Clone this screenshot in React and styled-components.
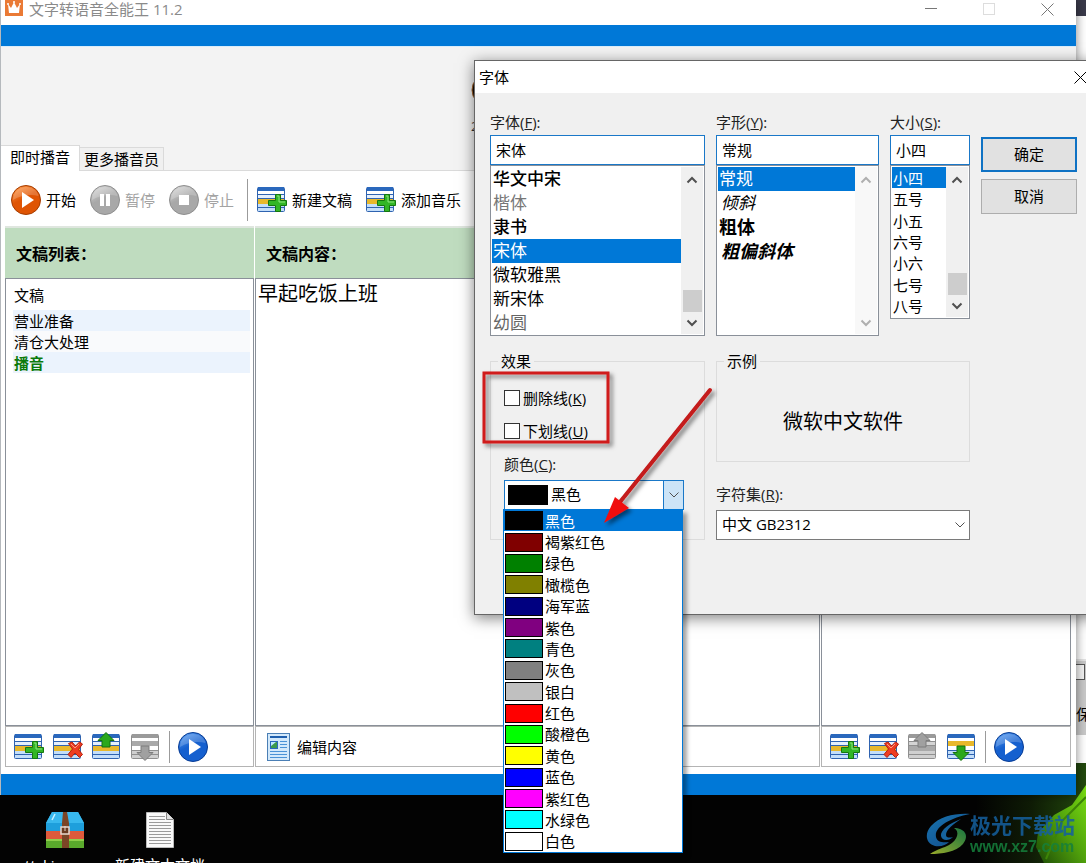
import React, { useState } from 'react'
import styled, { createGlobalStyle, css } from 'styled-components'

const GlobalStyle = createGlobalStyle`
  * { box-sizing: border-box; }
  body {
    margin: 0;
    overflow: hidden;
    background: #030303;
    color: #000;
    font: 15px/20px "Open Sans", "Noto Sans CJK SC", sans-serif;
  }
  button, input, select, textarea { font: inherit; color: inherit; }
  ul, fieldset, legend { margin: 0; padding: 0; }
  svg { flex-shrink: 0; }
`

const FONTS = [
  { name: '华文中宋', weight: 500 },
  { name: '楷体', color: '#777' },
  { name: '隶书', weight: 500 },
  { name: '宋体' },
  { name: '微软雅黑' },
  { name: '新宋体' },
  { name: '幼圆', color: '#666' },
]

const STYLES = [
  { name: '常规' },
  { name: '倾斜', italic: true },
  { name: '粗体', weight: 700, size: 18 },
  { name: '粗偏斜体', italic: true, weight: 700, size: 18 },
]

const SIZES = ['小四', '五号', '小五', '六号', '小六', '七号', '八号'].map(name => ({ name }))

const COLORS = [
  ['黑色', '#000000'],
  ['褐紫红色', '#800000'],
  ['绿色', '#008000'],
  ['橄榄色', '#808000'],
  ['海军蓝', '#000080'],
  ['紫色', '#800080'],
  ['青色', '#008080'],
  ['灰色', '#808080'],
  ['银白', '#c0c0c0'],
  ['红色', '#ff0000'],
  ['酸橙色', '#00ff00'],
  ['黄色', '#ffff00'],
  ['蓝色', '#0000ff'],
  ['紫红色', '#ff00ff'],
  ['水绿色', '#00ffff'],
  ['白色', '#ffffff'],
]

/* ---------- desktop ---------- */

const Desktop = styled.div`
  position: relative;
  display: flex;
  flex-direction: column;
  min-height: 100vh;
  overflow: hidden;
  background: #030303;
`

const Wallpaper = styled.svg`
  position: absolute;
  right: 0;
  bottom: 0;
`

const BackWindow = styled.div`
  position: absolute;
  top: 0;
  right: 0;
  bottom: 100px;
  width: 20px;
  display: flex;
  flex-direction: column;
  align-items: flex-end;
  border-top: 16px solid #3a3a4a;
  background: #fff;
  overflow: hidden;
`

const BackPanel = styled.div`
  width: 10px;
  height: 76px;
  margin-top: auto;
  margin-bottom: 28px;
  padding-top: 3px;
  background: #c9c9c9;
  border-top: 2px solid #e4e4e4;
  overflow: hidden;
`

const BackBox = styled.div`
  width: 9px;
  height: 16px;
  margin-bottom: 24px;
  background: #f4f4f4;
  border: 1px solid #555;
  border-left: 0;
`

const DesktopIcons = styled.div`
  position: relative;
  display: flex;
  gap: 5px;
  height: 68px;
  padding: 16px 20px 0;
  overflow: hidden;
`

const DesktopItem = styled.div`
  display: flex;
  flex-direction: column;
  align-items: center;
  gap: 6px;
  width: 90px;
  color: #fff;
  white-space: nowrap;
`

const Watermark = styled.div`
  position: absolute;
  right: 11px;
  bottom: 6px;
  display: flex;
  align-items: center;
  opacity: 0.85;
`

const WatermarkText = styled.div`
  display: flex;
  flex-direction: column;
  color: #15609f;
  font: 700 21px/26px "Noto Sans CJK SC", sans-serif;

  span {
    color: #15803c;
    font: 700 16px/20px "Liberation Sans", sans-serif;
  }
`

/* ---------- main window ---------- */

const AppWindow = styled.main`
  position: relative;
  flex: 1;
  display: flex;
  flex-direction: column;
  margin-right: 10px;
  border-left: 1px solid #b5b9bd;
  background: #fff;
  box-shadow: 0 0 10px rgba(0, 0, 0, 0.5);
`

const TitleBar = styled.header`
  display: flex;
  align-items: flex-start;
  height: 25px;
  padding-left: 4px;
  color: #8a8a8a;
`

const WindowTitle = styled.h1`
  flex: 1;
  margin: 0 0 0 6px;
  font: inherit;
  line-height: 18px;
`

const CaptionButton = styled.button`
  display: flex;
  align-items: center;
  justify-content: center;
  width: ${p => p.$width || 58}px;
  height: ${p => p.$height || 18}px;
  padding: 0;
  border: 0;
  background: none;
`

const BlueBand = styled.div`
  height: 21px;
  background: #0078d7;
`

const Banner = styled.div`
  display: flex;
  flex-direction: column;
  justify-content: flex-end;
  height: 125px;
  border-top: 1px solid #d9ecfa;
  background: #f3f3f3;
  box-shadow: inset 0 -1px #dadada;
`

const BannerMark = styled.div`
  display: flex;
  flex-direction: column;
  gap: 11px;
  margin-left: 470px;
  height: 72px;
  color: #333;
  font-size: 13px;
  line-height: 16px;
`

const Tabs = styled.div`
  display: flex;
  align-items: flex-end;
`

const Tab = styled.button`
  height: ${p => (p.$active ? 26 : 24)}px;
  padding: ${p => (p.$active ? '0 9px 4px' : '0 4px')};
  border: 1px solid #dadada;
  border-left: 0;
  border-bottom: ${p => (p.$active ? 0 : '1px solid #dadada')};
  background: ${p => (p.$active ? '#fff' : '#f0f0f0')};
  line-height: 20px;
`

const Toolbar = styled.div`
  display: flex;
  align-items: center;
  gap: 14px;
  height: 55px;
  padding: 2px 0 0 10px;
`

const ToolButton = styled.button`
  display: flex;
  align-items: center;
  gap: 5px;
  padding: 0;
  border: 0;
  background: none;
  white-space: nowrap;

  &:disabled { color: #a3a3a3; }
`

const Divider = styled.span`
  width: 1px;
  height: ${p => p.$height}px;
  margin: 0 -1px;
  background: #9b9b9b;
`

const ToolGroup = styled.div`
  display: flex;
  align-items: center;
  gap: 14px;
  margin-left: -4px;
`

const Panels = styled.div`
  flex: 1;
  display: grid;
  grid-template-columns: 249px 1fr 250px;
  gap: 1px;
  padding: 0 5px 7px 4px;
`

const Panel = styled.section`
  display: flex;
  flex-direction: column;
`

const PanelTitle = styled.h2`
  height: 52px;
  margin: 0;
  padding: 0 11px;
  border-top: 2px solid #dfe6df;
  background: #bfdcbf;
  font-size: 16px;
  font-weight: 700;
  line-height: 52px;
`

const PanelBody = styled.div`
  flex: 1;
  display: flex;
  flex-direction: column;
  padding: ${p => (p.$flush ? 0 : '6px 3px 0 7px')};
  border: 1px solid #8a9099;
`

const PanelFooter = styled.div`
  display: flex;
  align-items: center;
  gap: 9px;
  height: 41px;
  padding-left: ${p => p.$indent || 8}px;
  border: 1px solid #b4b4b4;
`

const DocTable = styled.table`
  border-collapse: collapse;
  width: 100%;

  th, td {
    height: 21px;
    padding: 0 1px;
    text-align: left;
    font-weight: 400;
    line-height: 20px;
  }
  th {
    height: 25px;
    padding-bottom: 5px;
  }
`

const DocRow = styled.tr`
  background: ${p => (p.$shaded ? '#ebf3fd' : '#f9fafc')};

  td {
    color: ${p => (p.$playing ? '#0b7a0b' : '#000')};
    font-weight: ${p => (p.$playing ? 700 : 400)};
  }
`

const Editor = styled.textarea`
  flex: 1;
  width: 100%;
  padding: 1px 2px;
  border: 0;
  outline: 0;
  resize: none;
  background: none;
  font-size: 20px;
  line-height: 28px;
`

/* ---------- font dialog ---------- */

const Dialog = styled.div`
  position: absolute;
  top: 60px;
  left: 474px;
  width: 632px;
  border: 1px solid #666;
  background: #f0f0f0;
  box-shadow: 0 3px 14px rgba(0, 0, 0, 0.5);
`

const DialogTitle = styled.div`
  display: flex;
  align-items: center;
  justify-content: space-between;
  height: 32px;
  padding-left: 4px;
  background: #fff;
`

const DialogGrid = styled.form`
  display: grid;
  grid-template-columns: 215px 163px 80px 96px;
  align-items: start;
  gap: 15px 11px;
  padding: 19px 15px 74px;
`

const Field = styled.div`
  display: flex;
  flex-direction: column;
`

const SideColumn = styled.div`
  display: flex;
  flex-direction: column;
  gap: 22px;
  grid-column: span 2;
`

const Label = styled.label`
  line-height: 20px;
  margin-bottom: ${p => p.$gap || 3}px;
  color: #222;
`

const TextBox = styled.input`
  width: 100%;
  height: 30px;
  padding: 0 5px 2px;
  border: 1px solid #1a78c8;
  outline: 0;
  background: #fff;
`

const ListFrame = styled.div`
  display: flex;
  height: ${p => p.$height}px;
  padding: 1px;
  border: 1px solid #8a9099;
  background: #fff;
`

const Options = styled.ul`
  flex: 1;
  display: grid;
  grid-auto-rows: ${p => (p.$fill ? '1fr' : '24px')};
  list-style: none;
`

const Option = styled.li`
  display: flex;
  align-items: center;
  padding-left: ${p => (p.$italic ? 3 : 1)}px;
  font-size: ${p => p.$size || 17}px;
  font-style: ${p => (p.$italic ? 'italic' : 'normal')};
  font-weight: ${p => p.$weight || 400};
  color: ${p => p.$color || '#000'};
  white-space: nowrap;
  ${p => p.$selected && css`
    background: #0078d7;
    color: #fff;
  `}
`

const ScrollTrack = styled.div`
  display: flex;
  flex-direction: column;
  align-items: center;
  justify-content: space-between;
  width: 22px;
  padding: 9px 0 7px;
  background: #f0f0f0;
  opacity: ${p => (p.$idle ? 0.45 : 1)};
`

const ScrollThumb = styled.div`
  width: 19px;
  height: 22px;
  margin: auto 0 7px;
  background: #cdcdcd;
`

const PushButton = styled.button`
  height: 35px;
  padding: 0 0 2px;
  border: ${p => (p.$primary ? '2px solid #0f72c4' : '1px solid #adadad')};
  background: #e1e1e1;
`

const ButtonColumn = styled.div`
  display: flex;
  flex-direction: column;
  gap: 7px;
  padding-top: 25px;
`

const Group = styled.fieldset`
  min-width: 0;
  border: 1px solid #dcdcdc;
`

const GroupBody = styled.div`
  padding: 17px 20px 29px 13px;
`

const Legend = styled.legend`
  margin-left: 7px;
  padding: 0 3px;
  line-height: 20px;
`

const CheckRow = styled.label`
  display: flex;
  align-items: center;
  gap: 3px;
  height: 20px;
  margin-bottom: 13px;

  input {
    appearance: none;
    width: 16px;
    height: 16px;
    margin: 0;
    border: 1px solid #333;
    background: #fff;
  }
  input:checked { background: #0078d7; }
`

const Combo = styled.div`
  position: relative;
  display: grid;
  align-items: center;

  > * { grid-area: 1 / 1; }
`

const Select = styled.select`
  appearance: none;
  width: 100%;
  height: 30px;
  padding: 0 24px 2px ${p => p.$indent || 5}px;
  border: 1px solid ${p => (p.$open ? '#1a78c8' : '#7a7a7a')};
  border-radius: 0;
  outline: 0;
  background: #fff;
`

const ComboArrow = styled.span`
  justify-self: end;
  display: flex;
  align-items: center;
  justify-content: center;
  width: 21px;
  height: 30px;
  pointer-events: none;
  ${p => p.$open && css`
    border: 1px solid #1a78c8;
    background: #cce4f7;
  `}
`

const Swatch = styled.span`
  width: ${p => p.$width || 38}px;
  height: ${p => p.$height || 19}px;
  margin-left: ${p => p.$inset || 0}px;
  border: 1px solid #000;
  background: ${p => p.$color};
  pointer-events: none;
`

const ColorMenu = styled.ul`
  position: absolute;
  z-index: 2;
  top: 29px;
  left: -1px;
  display: grid;
  grid-auto-rows: 1fr;
  width: 100%;
  height: 344px;
  border: 1px solid #0078d7;
  background: #fff;
  box-shadow: 4px 4px 4px rgba(0, 0, 0, 0.35);
  list-style: none;
`

const ColorOption = styled.li`
  display: flex;
  align-items: center;
  gap: 2px;
  padding-left: 1px;
  background: ${p => (p.$selected ? '#0078d7' : '#fff')};
  color: ${p => (p.$selected ? '#fff' : '#000')};
`

const Sample = styled.output`
  display: flex;
  align-items: center;
  justify-content: center;
  height: 90px;
  padding-top: 12px;
  font-size: 20px;
`

const Marks = styled.svg`
  position: absolute;
  z-index: 3;
  top: 360px;
  left: 474px;
  pointer-events: none;
`

/* ---------- icons ---------- */

const PALETTE = {
  color: { top: '#2a68bd', line: '#2f63b0', mid: '#e4effc', low: '#c3defa', hot: '#e8b82b' },
  gray: { top: '#9a9a9a', line: '#8f8f8f', mid: '#d4d4d4', low: '#cfcfcf', hot: '#a9a9a9' },
}

function RowsIcon({ kind, gray }) {
  const c = gray ? PALETTE.gray : PALETTE.color
  const hotY = kind === 'down' ? 9 : 14
  const arrow = gray ? '#a0a0a0' : '#2aa81c'
  const arrowEdge = gray ? '#7d7d7d' : '#14700f'
  return (
    <svg width="30" height="30" viewBox="0 0 30 30" aria-hidden="true">
      <rect x="0.5" y="2.5" width="27" height="24" rx="1" fill="#fff" stroke={c.line} />
      <rect x="1" y="2" width="26" height="4" fill={c.top} />
      <rect x="1" y="10" width="26" height="4" fill={c.mid} />
      <rect x="1" y="19" width="26" height="7" fill={c.low} />
      <path d="M1 9.5h26M1 13.5h26M1 18.5h26M1 22.5h26" stroke={c.line} />
      <rect x="1" y={hotY} width="26" height="5" fill={c.hot} />
      {kind === 'add' && (
        <g>
          <path d="M18.5 9.5h5v6h6v5h-6v6h-5v-6h-7v-5h7z" fill="#32b626" stroke="#15770f" />
          <path d="M20 11h2v6h6" fill="none" stroke="#8fe67e" />
        </g>
      )}
      {kind === 'remove' && (
        <g>
          <path d="M15.500 11.500l3.500-1.500 3.500 4 4-4 3 2-4 5.500 4 5-3 3-4.500-4.500-4 4.500-3-3 4.500-5.500z" fill="#ee3d22" stroke="#b3200f" />
          <path d="M18 12l4 4 4-4" fill="none" stroke="#ff9a7d" />
        </g>
      )}
      {kind === 'up' && <path d="M14 .500l8 8h-4v6.500h-8V8.500H6z" fill={arrow} stroke={arrowEdge} />}
      {kind === 'down' && <path d="M14 28.500l8-8h-4V14h-8v6.500H6z" fill={arrow} stroke={arrowEdge} />}
    </svg>
  )
}

const BALLS = {
  orange: ['#ff9a4a', '#df5404', '#a53c00'],
  gray: ['#d8d8d8', '#a8a8a8', '#8e8e8e'],
  blue: ['#5a9df0', '#1560cf', '#083c94'],
}

function Ball({ tone, shape }) {
  const [light, base, dark] = BALLS[tone]
  const id = 'ball-' + tone
  return (
    <svg width="30" height="30" viewBox="0 0 30 30" aria-hidden="true">
      <defs>
        <linearGradient id={id} x1="0.2" y1="0" x2="0.7" y2="1">
          <stop offset="0" stopColor={light} />
          <stop offset="0.45" stopColor={base} />
          <stop offset="1" stopColor={base} />
        </linearGradient>
      </defs>
      <circle cx="15" cy="15" r="14.500" fill={`url(#${id})`} stroke={dark} />
      <path d="M2 15C2 7 8 2 15 2s12 4 12.500 9C20 9 10 10 2 15z" fill="#fff" opacity="0.2" />
      {shape === 'play' && <path d="M11 7l12 8-12 8z" fill="#fff" />}
      {shape === 'pause' && <path d="M10 9h4v12h-4zM16 9h4v12h-4z" fill="#fff" />}
      {shape === 'stop' && <path d="M10 10h10v10H10z" fill="#fff" />}
    </svg>
  )
}

function Chevron({ up, thick = 2, color = '#505050' }) {
  return (
    <svg width="12" height="8" viewBox="0 0 12 8" aria-hidden="true">
      <path d={up ? 'M1.500 6.500L6 2l4.500 4.500' : 'M1.500 1.500L6 6l4.500-4.500'} fill="none" stroke={color} strokeWidth={thick} />
    </svg>
  )
}

const CrownLogo = () => (
  <svg width="18" height="17" viewBox="0 0 18 17" aria-hidden="true">
    <path d="M0 0h18v16H0z" fill="#ea7a35" />
    <path d="M3 4l3 4 3-6 3 6 3-4-1 9H4z" fill="#fff" />
    <circle cx="3" cy="4" r="1" fill="#fff" />
    <circle cx="9" cy="2" r="1" fill="#fff" />
    <circle cx="15" cy="4" r="1" fill="#fff" />
  </svg>
)

const Cross = ({ color }) => (
  <svg width="13" height="13" viewBox="0 0 13 13" aria-hidden="true">
    <path d="M.500.500l12 12M12.500.500l-12 12" stroke={color} />
  </svg>
)

const PageIcon = () => (
  <svg width="25" height="28" viewBox="0 0 25 28" aria-hidden="true">
    <rect x="0.5" y="0.5" width="22" height="27" fill="#d3e9fb" stroke="#4b7fb5" />
    <rect x="3" y="3" width="17" height="2" fill="#1f5fae" />
    <rect x="3.500" y="8.500" width="7" height="7" fill="#3c9a4d" stroke="#2a68bd" />
    <path d="M4 9h5l-5 4z" fill="#bfe8ff" />
    <path d="M13 8.500h7M13 11.500h7M13 14.500h7M3 18.500h17M3 21.500h17M3 24.500h17" stroke="#4a92d6" />
  </svg>
)

const ArchiveIcon = () => (
  <svg width="38" height="38" viewBox="0 0 38 38" aria-hidden="true">
    <path d="M6 1h26l6 11v8H0v-8z" fill="#1e9fdc" />
    <path d="M6 1h26l6 11H0z" fill="#38b8ee" />
    <path d="M0 20h38v8H0z" fill="#dd5a3c" />
    <path d="M0 28h38v9H0z" fill="#5aa92c" />
    <path d="M0 28h38v2H0z" fill="#8fcf4c" />
    <path d="M9 3L6 9" stroke="#c8f0ff" strokeWidth="1.500" />
    <path d="M17 1h4l2 11v25h-7V12z" fill="#7b4526" />
    <rect x="15" y="16" width="8" height="7" fill="#6a3a20" stroke="#e8d9cf" strokeWidth="1.500" />
    <path d="M19 15v5" stroke="#e8d9cf" />
  </svg>
)

const TextFileIcon = () => (
  <svg width="28" height="38" viewBox="0 0 28 38" aria-hidden="true">
    <path d="M.500 1.500h20l7 7v28H.500z" fill="#fafafa" stroke="#bbb" />
    <path d="M20.500 1.500v7h7" fill="#e2e2e2" stroke="#888" />
    <path d="M3 5.500h16M3 8.500h16M3 11.500h22M3 14.500h22M3 17.500h22M3 20.500h22M3 23.500h22M3 26.500h22M3 29.500h22M3 32.500h22" stroke="#9b9b9b" />
  </svg>
)

const SwirlLogo = () => (
  <svg width="44" height="42" viewBox="0 0 44 42" aria-hidden="true">
    <defs>
      <linearGradient id="swirl" x1="0" y1="0" x2="1" y2="1">
        <stop offset="0" stopColor="#1c8ad0" />
        <stop offset="1" stopColor="#17549c" />
      </linearGradient>
      <linearGradient id="leaf" x1="1" y1="0" x2="0" y2="1">
        <stop offset="0" stopColor="#1c8a4c" />
        <stop offset="1" stopColor="#b4c832" />
      </linearGradient>
    </defs>
    <path d="M44 1C30 0 14 3 5 13-2 21 0 31 9 33c6 1 11-1 14-4-6 1-12 0-13-5C8 14 24 5 44 1z" fill="url(#swirl)" />
    <path d="M35 6C24 10 14 17 15 23c1 5 8 5 12 1-3 1-7 1-7-2 0-5 7-11 15-16z" fill="#1a74b8" />
    <path d="M28 15c6 3 4 12-5 17-5 3-12 4-19 9 12 0 26-2 33-10 7-9 1-16-9-16z" fill="url(#leaf)" />
  </svg>
)

/* ---------- parts ---------- */

function ListBox({ label, items, height, selected, onSelect, fill, idle, size }) {
  return (
    <ListFrame $height={height}>
      <Options role="listbox" aria-label={label} $fill={fill}>
        {items.map(item => (
          <Option
            key={item.name}
            role="option"
            aria-selected={item.name === selected}
            $selected={item.name === selected}
            $italic={item.italic}
            $weight={item.weight}
            $color={item.color}
            $size={item.size || size}
            onClick={() => onSelect(item.name)}
          >
            {item.name}
          </Option>
        ))}
      </Options>
      <ScrollTrack $idle={idle}>
        <Chevron up />
        {!idle && <ScrollThumb />}
        <Chevron />
      </ScrollTrack>
    </ListFrame>
  )
}

function ListTools({ upDisabled, downDisabled }) {
  return (
    <PanelFooter>
      <ToolButton aria-label="新建"><RowsIcon kind="add" /></ToolButton>
      <ToolButton aria-label="删除"><RowsIcon kind="remove" /></ToolButton>
      <ToolButton aria-label="上移" disabled={upDisabled}><RowsIcon kind="up" gray={upDisabled} /></ToolButton>
      <ToolButton aria-label="下移" disabled={downDisabled}><RowsIcon kind="down" gray={downDisabled} /></ToolButton>
      <Divider $height={32} />
      <ToolButton aria-label="播放"><Ball tone="blue" shape="play" /></ToolButton>
    </PanelFooter>
  )
}

function FontDialog() {
  const [font, setFont] = useState('宋体')
  const [style, setStyle] = useState('常规')
  const [size, setSize] = useState('小四')
  const [color, setColor] = useState('黑色')
  const swatch = COLORS.find(c => c[0] === color)[1]

  return (
    <Dialog role="dialog" aria-labelledby="font-title">
      <DialogTitle>
        <span id="font-title">字体</span>
        <CaptionButton $width={50} $height={32} aria-label="关闭"><Cross color="#000" /></CaptionButton>
      </DialogTitle>
      <DialogGrid onSubmit={e => e.preventDefault()}>
        <Field>
          <Label htmlFor="font">字体(<u>F</u>):</Label>
          <TextBox id="font" value={font} onChange={e => setFont(e.target.value)} />
          <ListBox label="字体" items={FONTS} height={171} selected={font} onSelect={setFont} />
        </Field>
        <Field>
          <Label htmlFor="style">字形(<u>Y</u>):</Label>
          <TextBox id="style" value={style} onChange={e => setStyle(e.target.value)} />
          <ListBox label="字形" items={STYLES} height={171} selected={style} onSelect={setStyle} idle />
        </Field>
        <Field>
          <Label htmlFor="size">大小(<u>S</u>):</Label>
          <TextBox id="size" value={size} onChange={e => setSize(e.target.value)} />
          <ListBox label="大小" items={SIZES} height={154} selected={size} onSelect={setSize} fill size={15} />
        </Field>
        <ButtonColumn>
          <PushButton type="submit" $primary>确定</PushButton>
          <PushButton type="button">取消</PushButton>
        </ButtonColumn>

        <Group>
          <Legend>效果</Legend>
          <GroupBody>
            <CheckRow><input type="checkbox" /><span>删除线(<u>K</u>)</span></CheckRow>
            <CheckRow><input type="checkbox" /><span>下划线(<u>U</u>)</span></CheckRow>
            <Field>
              <Label htmlFor="color" $gap={6}>颜色(<u>C</u>):</Label>
              <Combo>
                <Select id="color" $indent={46} $open value={color} onChange={e => setColor(e.target.value)}>
                  {COLORS.map(([name]) => <option key={name}>{name}</option>)}
                </Select>
                <Swatch $color={swatch} $width={40} $height={20} $inset={4} />
                <ComboArrow $open><Chevron thick={1} /></ComboArrow>
                <ColorMenu role="listbox" aria-label="颜色">
                  {COLORS.map(([name, value]) => (
                    <ColorOption
                      key={name}
                      role="option"
                      aria-selected={name === color}
                      $selected={name === color}
                      onClick={() => setColor(name)}
                    >
                      <Swatch $color={value} />
                      {name}
                    </ColorOption>
                  ))}
                </ColorMenu>
              </Combo>
            </Field>
          </GroupBody>
        </Group>
        <SideColumn>
          <Group>
            <Legend>示例</Legend>
            <Sample>微软中文软件</Sample>
          </Group>
          <Field>
            <Label htmlFor="charset" $gap={6}>字符集(<u>R</u>):</Label>
            <Combo>
              <Select id="charset"><option>中文 GB2312</option></Select>
              <ComboArrow><Chevron thick={1} /></ComboArrow>
            </Combo>
          </Field>
        </SideColumn>
      </DialogGrid>
    </Dialog>
  )
}

export default function App() {
  const [text, setText] = useState('早起吃饭上班')

  return (
    <Desktop>
      <GlobalStyle />
      <Wallpaper width="110" height="100" viewBox="0 0 110 100" aria-hidden="true">
        <defs>
          <linearGradient id="dusk" x1="0" y1="0" x2="1" y2="0">
            <stop offset="0" stopColor="#030303" />
            <stop offset="0.5" stopColor="#0f1c06" />
            <stop offset="1" stopColor="#234a0e" />
          </linearGradient>
          <linearGradient id="grass" x1="0" y1="1" x2="1" y2="0">
            <stop offset="0" stopColor="#1c4a06" />
            <stop offset="0.5" stopColor="#4f9f0c" />
            <stop offset="1" stopColor="#7be012" />
          </linearGradient>
        </defs>
        <rect width="110" height="100" fill="url(#dusk)" />
        <path d="M110 22L96 42 78 52 62 70 60 84 68 100h42z" fill="url(#grass)" />
        <path d="M110 34L86 58 70 96" fill="none" stroke="#3d8508" strokeWidth="2" />
      </Wallpaper>
      <BackWindow aria-hidden="true">
        <BackPanel>
          <BackBox />
          保
        </BackPanel>
      </BackWindow>

      <AppWindow>
        <TitleBar>
          <CrownLogo />
          <WindowTitle>文字转语音全能王 11.2</WindowTitle>
          <CaptionButton aria-label="最小化">
            <svg width="12" height="12" aria-hidden="true"><path d="M0 5.500h12" stroke="#777" /></svg>
          </CaptionButton>
          <CaptionButton aria-label="最大化">
            <svg width="12" height="12" aria-hidden="true"><rect x="0.5" y="0.5" width="11" height="11" fill="none" stroke="#ddd" /></svg>
          </CaptionButton>
          <CaptionButton aria-label="关闭"><Cross color="#777" /></CaptionButton>
        </TitleBar>
        <BlueBand />
        <Banner>
          <BannerMark>
            <svg width="34" height="34" viewBox="0 0 34 34" aria-hidden="true">
              <circle cx="17" cy="17" r="16" fill="#1a0d04" stroke="#a8672c" />
            </svg>
            2
          </BannerMark>
          <Tabs role="tablist">
            <Tab role="tab" aria-selected="true" $active>即时播音</Tab>
            <Tab role="tab" aria-selected="false">更多播音员</Tab>
          </Tabs>
        </Banner>
        <Toolbar>
          <ToolButton><Ball tone="orange" shape="play" />开始</ToolButton>
          <ToolButton disabled><Ball tone="gray" shape="pause" />暂停</ToolButton>
          <ToolButton disabled><Ball tone="gray" shape="stop" />停止</ToolButton>
          <Divider $height={42} />
          <ToolGroup>
            <ToolButton><RowsIcon kind="add" />新建文稿</ToolButton>
            <ToolButton><RowsIcon kind="add" />添加音乐</ToolButton>
          </ToolGroup>
        </Toolbar>
        <Panels>
          <Panel>
            <PanelTitle>文稿列表：</PanelTitle>
            <PanelBody>
              <DocTable>
                <thead>
                  <tr><th>文稿</th></tr>
                </thead>
                <tbody>
                  <DocRow $shaded><td>营业准备</td></DocRow>
                  <DocRow><td>清仓大处理</td></DocRow>
                  <DocRow $shaded $playing><td>播音</td></DocRow>
                </tbody>
              </DocTable>
            </PanelBody>
            <ListTools downDisabled />
          </Panel>
          <Panel>
            <PanelTitle>文稿内容：</PanelTitle>
            <PanelBody $flush>
              <Editor aria-label="文稿内容" value={text} onChange={e => setText(e.target.value)} />
            </PanelBody>
            <PanelFooter $indent={11}>
              <ToolButton><PageIcon />编辑内容</ToolButton>
            </PanelFooter>
          </Panel>
          <Panel>
            <PanelTitle />
            <PanelBody />
            <ListTools upDisabled />
          </Panel>
        </Panels>
        <BlueBand />
      </AppWindow>

      <DesktopIcons>
        <DesktopItem><ArchiveIcon />ttsking_vz...</DesktopItem>
        <DesktopItem><TextFileIcon />新建文本文档</DesktopItem>
      </DesktopIcons>

      <FontDialog />

      {/* red frame round the effects and arrow to the chosen colour */}
      <Marks width="250" height="180" viewBox="0 0 250 180" aria-hidden="true">
        <defs>
          <filter id="drop" x="-20%" y="-20%" width="150%" height="150%">
            <feDropShadow dx="3" dy="3" stdDeviation="2" floodOpacity="0.5" />
          </filter>
        </defs>
        <g filter="url(#drop)">
          <rect x="10" y="13" width="124" height="69" fill="none" stroke="#d01a1a" strokeWidth="3" />
          <path d="M236 30L146 142" stroke="#c41a1a" strokeWidth="4" strokeLinecap="round" />
          <path d="M130 163l11-26 5 4 9 7z" fill="#f01010" />
        </g>
      </Marks>

      <Watermark>
        <SwirlLogo />
        <WatermarkText>
          极光下载站
          <span>www.xz7.com</span>
        </WatermarkText>
      </Watermark>
    </Desktop>
  )
}
